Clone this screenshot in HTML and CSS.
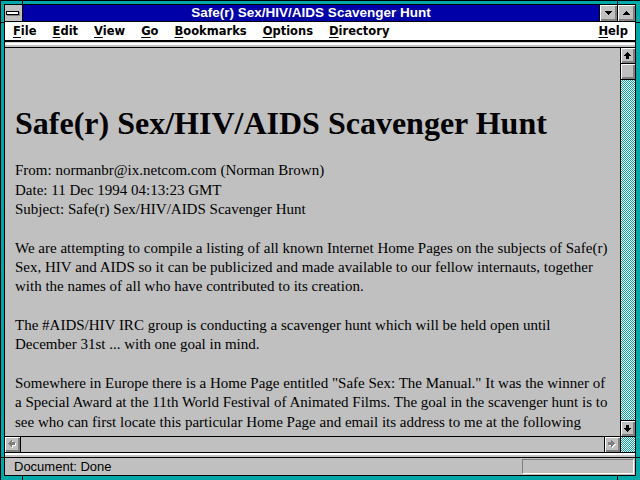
FILE: index.html
```html
<!DOCTYPE html>
<html>
<head>
<meta charset="utf-8">
<title>Safe(r) Sex/HIV/AIDS Scavenger Hunt</title>
<link rel="stylesheet" href="styles.css">
</head>
<body>
<div class="window">
  <div class="notch nt1"></div><div class="notch nt2"></div>
  <div class="notch nb1"></div><div class="notch nb2"></div>
  <div class="notch nl1"></div><div class="notch nl2"></div>
  <div class="notch nr1"></div><div class="notch nr2"></div>
  <div class="frame">
    <div class="titlebar">
      <div class="sysbox"><div class="sysbar"></div></div>
      <div class="title">Safe(r) Sex/HIV/AIDS Scavenger Hunt</div>
      <div class="tbtn"><svg width="7" height="4" viewBox="0 0 7 4" shape-rendering="crispEdges"><path d="M0 0h7v1h-1v1h-1v1h-1v1h-1v-1h-1v-1h-1v-1h-1z" fill="#000"/></svg></div>
      <div class="tbtn"><svg width="7" height="4" viewBox="0 0 7 4" shape-rendering="crispEdges"><path d="M3 0h1v1h1v1h1v1h1v1h-7v-1h1v-1h1v-1h1z" fill="#000"/></svg></div>
    </div>
    <div class="menubar">
      <span class="mi"><u>F</u>ile</span>
      <span class="mi"><u>E</u>dit</span>
      <span class="mi"><u>V</u>iew</span>
      <span class="mi"><u>G</u>o</span>
      <span class="mi"><u>B</u>ookmarks</span>
      <span class="mi"><u>O</u>ptions</span>
      <span class="mi"><u>D</u>irectory</span>
      <span class="mi help"><u>H</u>elp</span>
    </div>
    <div class="strip"></div>
    <div class="main">
      <div class="page">
        <h1>Safe(r) Sex/HIV/AIDS Scavenger Hunt</h1>
        <p>From: normanbr@ix.netcom.com (Norman Brown)<br>Date: 11 Dec 1994 04:13:23 GMT<br>Subject: Safe(r) Sex/HIV/AIDS Scavenger Hunt</p>
        <p>We are attempting to compile a listing of all known Internet Home Pages on the subjects of Safe(r) Sex, HIV and AIDS so it can be publicized and made available to our fellow internauts, together with the names of all who have contributed to its creation.</p>
        <p>The #AIDS/HIV IRC group is conducting a scavenger hunt which will be held open until December 31st ... with one goal in mind.</p>
        <p>Somewhere in Europe there is a Home Page entitled "Safe Sex: The Manual." It was the winner of a Special Award at the 11th World Festival of Animated Films. The goal in the scavenger hunt is to see who can first locate this particular Home Page and email its address to me at the following address:</p>
      </div>
      <div class="vscroll">
        <div class="sbtn up"><svg width="7" height="7" viewBox="0 0 7 7" shape-rendering="crispEdges"><path d="M3 0h1v1h1v1h1v1h1v1h-2v3h-3v-3h-2v-1h1v-1h1v-1h1z" fill="#000"/></svg></div>
        <div class="thumb"></div>
        <div class="track"></div>
        <div class="sbtn down"><svg width="7" height="7" viewBox="0 0 7 7" shape-rendering="crispEdges"><path d="M3 7h1v-1h1v-1h1v-1h1v-1h-2v-3h-3v3h-2v1h1v1h1v1h1z" fill="#000"/></svg></div>
      </div>
    </div>
    <div class="hscroll">
      <div class="hbtn left"><svg width="8" height="8" viewBox="0 0 8 8" shape-rendering="crispEdges"><path transform="translate(1 1)" d="M0 3v1h1v1h1v1h1v1h1v-2h3v-3h-3v-2h-1v1h-1v1h-1v1h-1z" fill="#fff"/><path d="M0 3v1h1v1h1v1h1v1h1v-2h3v-3h-3v-2h-1v1h-1v1h-1v1h-1z" fill="#808080"/></svg></div>
      <div class="htrack"></div>
      <div class="hbtn right"><svg width="8" height="8" viewBox="0 0 8 8" shape-rendering="crispEdges"><path transform="translate(1 1)" d="M7 3v1h-1v1h-1v1h-1v1h-1v-2h-3v-3h3v-2h1v1h1v1h1v1h1z" fill="#fff"/><path d="M7 3v1h-1v1h-1v1h-1v1h-1v-2h-3v-3h3v-2h1v1h1v1h1v1h1z" fill="#808080"/></svg></div>
      <div class="corner"></div>
    </div>
    <div class="strip2"></div>
    <div class="status">
      <span class="stext">Document: Done</span>
      <div class="sbox"></div>
    </div>
  </div>
</div>
</body>
</html>
```
FILE: styles.css
```css
* { box-sizing: border-box; margin: 0; padding: 0; }
html, body { width: 640px; height: 480px; overflow: hidden; background: #00a8a8; }

.window {
  position: relative;
  width: 640px;
  height: 480px;
  background: #00a8a8;
  border-top: 1px solid #000;
  border-left: 1px solid #000;
  padding: 3px 4px 4px 3px;
}
.notch { position: absolute; background: #000; }
.nt1, .nt2, .nb1, .nb2 { width: 1px; height: 5px; }
.nl1, .nl2, .nr1, .nr2 { width: 5px; height: 1px; }
.nt1 { left: 21px; top: -1px; }
.nt2 { left: 616px; top: -1px; }
.nb1 { left: 21px; top: 474px; }
.nb2 { left: 616px; top: 474px; }
.nl1 { left: -1px; top: 21px; }
.nl2 { left: -1px; top: 456px; }
.nr1 { left: 634px; top: 21px; }
.nr2 { left: 634px; top: 456px; }

.frame {
  width: 632px;
  height: 472px;
  border: 1px solid #000;
  background: #c0c0c0;
  display: flex;
  flex-direction: column;
}

/* title bar */
.titlebar {
  height: 17px;
  flex: none;
  display: flex;
  border-bottom: 1px solid #000;
}
.sysbox {
  width: 18px;
  border-right: 1px solid #000;
  background: #c0c0c0;
  padding: 6px 0 0 1px;
}
.sysbar {
  width: 13px;
  height: 4px;
  border: 1px solid #000;
  background: #fff;
  box-shadow: 1px 1px 0 #808080;
}
.title {
  flex: 1;
  background: #0000a8;
  color: #fff;
  font: bold 13.5px/16px "Liberation Sans", Arial, sans-serif;
  text-align: center;
  white-space: nowrap;
}
.tbtn {
  width: 18px;
  border-left: 1px solid #000;
  background: #c0c0c0;
  box-shadow: inset 1px 1px #fff, inset -2px -2px #808080;
  display: flex;
  align-items: center;
  justify-content: center;
  padding: 0 1px 1px 0;
}
.tbtn svg { display: block; }

/* menu bar */
.menubar {
  height: 20px;
  flex: none;
  background: #fff;
  border-bottom: 2px solid #000;
  display: flex;
  align-items: center;
  gap: 16px;
  padding: 0 7px 0 8px;
  font: bold 11.5px/18px "DejaVu Sans", sans-serif;
  color: #000;
}
.mi u { text-decoration: underline; text-underline-offset: 2px; text-decoration-thickness: 1px; }
.help { margin-left: auto; }

.strip {
  height: 6px;
  flex: none;
  border-bottom: 1px solid #000;
  background: linear-gradient(#d4d4d4 0 1px, #fff 1px 3px, #c0c0c0 3px);
}

/* main content */
.main {
  flex: 1;
  display: flex;
  min-height: 0;
}
.page {
  flex: 1;
  overflow: hidden;
  padding: 0 5px 0 10px;
  background: #c0c0c0;
  color: #000;
  font: 15px/19.35px "Liberation Serif", "Times New Roman", serif;
}
.page h1 {
  font: bold 32px/36px "Liberation Serif", "Times New Roman", serif;
  margin: 56.5px 0 20.7px;
  white-space: nowrap;
}
.page p { margin-bottom: 19.35px; }

.vscroll {
  width: 15px;
  flex: none;
  border-left: 1px solid #000;
  display: flex;
  flex-direction: column;
}
.sbtn {
  height: 16px;
  flex: none;
  background: #c0c0c0;
  box-shadow: inset 1px 1px #fff, inset -2px -2px #808080;
  display: flex;
  align-items: center;
  justify-content: center;
  padding: 0 1px 1px 0;
}
.sbtn.up { border-bottom: 1px solid #000; }
.sbtn.down { border-top: 1px solid #000; }
.sbtn svg { display: block; }
.thumb {
  height: 16px;
  flex: none;
  border-bottom: 1px solid #000;
  background: #c0c0c0;
  box-shadow: inset 1px 1px #fff, inset -2px -2px #808080;
}
.track, .corner {
  background: repeating-conic-gradient(#00a8a8 0 25%, #fff 0 50%) 0 0 / 2px 2px;
}
.track { flex: 1; }

.hscroll {
  height: 17px;
  flex: none;
  border-top: 1px solid #000;
  border-bottom: 1px solid #000;
  display: flex;
}
.hbtn {
  width: 16px;
  flex: none;
  background: #c0c0c0;
  box-shadow: inset 1px 1px #fff, inset -2px -2px #808080;
  display: flex;
  align-items: center;
  justify-content: center;
  padding: 0 1px 1px 0;
}
.hbtn.left { border-right: 1px solid #000; }
.hbtn.right { border-left: 1px solid #000; }
.hbtn svg { display: block; }
.htrack { flex: 1; background: #c0c0c0; }
.corner { width: 15px; flex: none; border-left: 1px solid #000; }

.strip2 {
  height: 4px;
  flex: none;
  background: linear-gradient(#fff 0 2px, #c0c0c0 2px);
}

/* status bar */
.status {
  height: 18px;
  flex: none;
  border-top: 1px solid #000;
  display: flex;
  align-items: center;
  padding: 0 1px 0 9px;
  font: 13px/16px "Liberation Sans", Arial, sans-serif;
  color: #000;
}
.sbox {
  margin-left: auto;
  width: 112px;
  height: 15px;
  border-top: 1px solid #808080;
  border-left: 1px solid #808080;
  border-bottom: 1px solid #fff;
  border-right: 1px solid #fff;
}
```
